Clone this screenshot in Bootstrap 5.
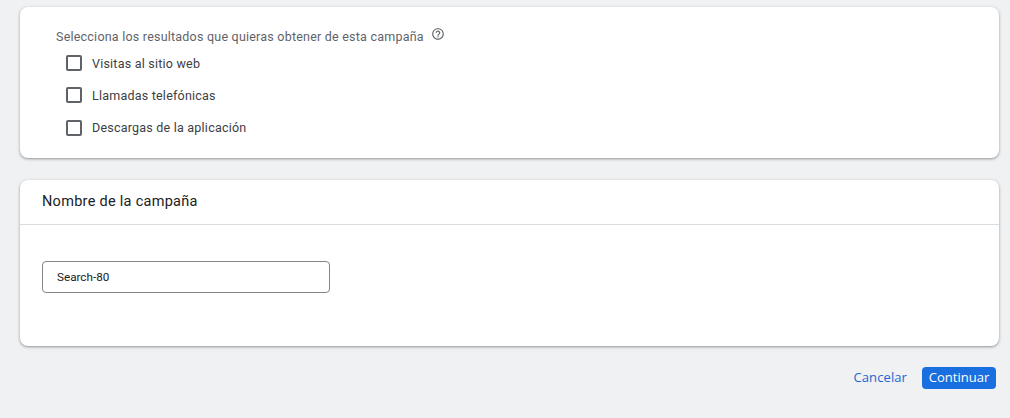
<!DOCTYPE html>
<html lang="es">
<head>
<meta charset="utf-8">
<title>Campaña</title>
<link href="https://cdn.jsdelivr.net/npm/bootstrap@5.3.0/dist/css/bootstrap.min.css" rel="stylesheet">
<style>
html,body{height:100%;overflow:hidden}
body{background:#f0f1f3;font-family:Roboto,"Liberation Sans",sans-serif;color:#3c4043}
.pane{margin:7px 11px 0 20px}
.sheet{background:#fff;border:0;border-radius:8px;box-shadow:0 1px 2px rgba(60,64,67,.35),0 1px 3px 1px rgba(60,64,67,.15)}
.goal-sheet{height:151px;padding:22px 0 0 36px}
.goal-title{font-size:12.5px;line-height:16px;letter-spacing:.22px;color:#5f6368;margin:0 0 3px}
.help-ico{width:14px;height:14px;margin-left:7px;margin-top:-6px;color:#5f6368}
.goal-row{height:32.3px;padding-left:10px;gap:10px;font-size:12.5px;letter-spacing:.22px;color:#3c4043}
.box-check{width:16px;height:16px;margin:0 0 2px;border:2px solid #5f6368;border-radius:2px;background:#fff;flex:none;appearance:none}
.name-sheet{height:166px;margin-top:22px}
.name-head{height:45px;padding:0 22px;border-bottom:1px solid #dadce0;font-size:14.5px;font-weight:400;color:#202124;letter-spacing:.28px}
.name-body{padding:36px 22px 0}
.name-field{width:288px;height:32px;border:1px solid #80868b;border-radius:4px;padding:0 14px;font-size:11.7px;color:#202124;font-family:Roboto,"Liberation Sans",sans-serif}
.foot-bar{margin-top:21px;gap:15px;padding-right:3px}
.act-link{font-size:13px;color:#1a67d2;padding:0;border:0;background:none;text-decoration:none;letter-spacing:.1px;font-family:"Open Sans",Roboto,sans-serif;font-weight:500}
.act-main{background:#1a6fe0;color:#fff;font-size:13px;font-weight:500;height:22px;width:74px;padding:0;border:0;border-radius:4px;letter-spacing:.02px;font-family:"Open Sans",Roboto,sans-serif}
</style>
</head>
<body>
<div class="pane">
  <div class="sheet goal-sheet">
    <p class="goal-title d-flex align-items-center">Selecciona los resultados que quieras obtener de esta campaña
      <svg class="help-ico" viewBox="0 0 24 24" fill="currentColor" aria-hidden="true"><path d="M11 18h2v-2h-2v2zm1-16C6.48 2 2 6.48 2 12s4.48 10 10 10 10-4.48 10-10S17.52 2 12 2zm0 18c-4.41 0-8-3.59-8-8s3.59-8 8-8 8 3.59 8 8-3.59 8-8 8zm0-14c-2.21 0-4 1.79-4 4h2c0-1.1.9-2 2-2s2 .9 2 2c0 2-3 1.75-3 5h2c0-2.25 3-2.5 3-5 0-2.21-1.79-4-4-4z"/></svg>
    </p>
    <label class="goal-row d-flex align-items-center"><input type="checkbox" class="box-check">Visitas al sitio web</label>
    <label class="goal-row d-flex align-items-center"><input type="checkbox" class="box-check">Llamadas telefónicas</label>
    <label class="goal-row d-flex align-items-center"><input type="checkbox" class="box-check">Descargas de la aplicación</label>
  </div>
  <div class="sheet name-sheet">
    <div class="name-head d-flex align-items-center">Nombre de la campaña</div>
    <div class="name-body">
      <input class="name-field d-block" type="text" value="Search-80" aria-label="Nombre de la campaña">
    </div>
  </div>
  <div class="foot-bar d-flex justify-content-end align-items-center">
    <a href="#" class="act-link">Cancelar</a>
    <button type="button" class="act-main">Continuar</button>
  </div>
</div>
<script src="https://cdn.jsdelivr.net/npm/bootstrap@5.3.0/dist/js/bootstrap.bundle.min.js"></script>
</body>
</html>
